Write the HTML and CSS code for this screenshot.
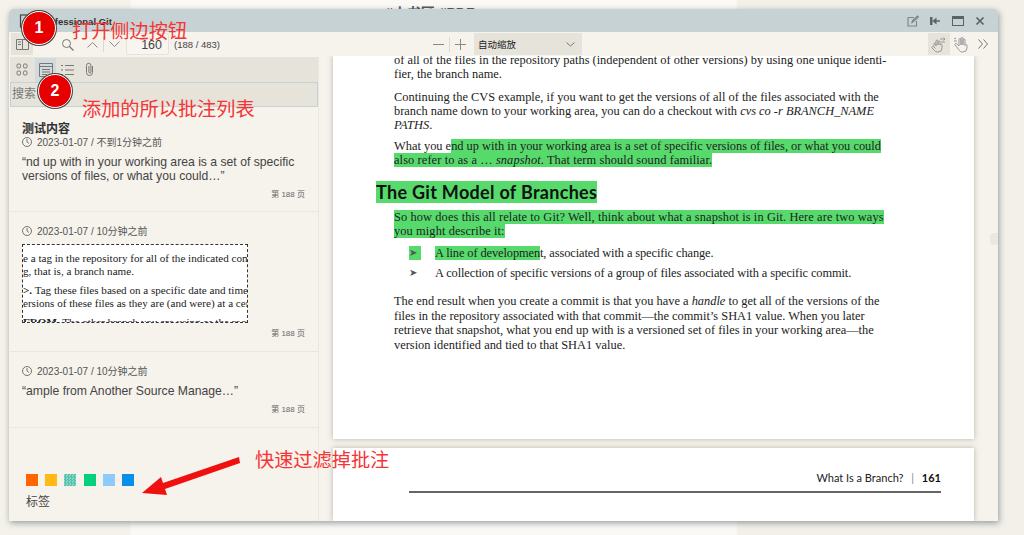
FILE: index.html
```html
<!DOCTYPE html>
<html lang="en">
<head>
    <meta charset="UTF-8">
    <meta name="viewport" content="width=device-width, initial-scale=1.0">
    <title>Professional Git</title>
    <link rel="stylesheet" href="styles.css">
</head>
<body>
    <div class="behind-title">#小书匠 #PDF</div>
    <div class="window">
        <header class="titlebar">
            <svg class="app-icon" width="14" height="14" viewBox="0 0 14 14"><rect x="1.5" y="1" width="11" height="12" fill="none" stroke="#444" stroke-width="1.2"/></svg>
            <span class="title">Professional Git</span>
            <div class="win-btns">
                <svg width="12" height="12" viewBox="0 0 12 12"><path d="M1 2.500h6M1 2.500v8.500h8.500V6M5 7.500l.5-2 5-4.500 1 1-5 4.500z" fill="none" stroke="#7d8688" stroke-width="1.100"/></svg>
                <svg width="12" height="12" viewBox="0 0 12 12"><path d="M1 2h2.500v8H1zM3.500 6l4-3.500v7zM7 5.300h4v1.400H7z" fill="#566"/></svg>
                <svg width="12" height="12" viewBox="0 0 12 12"><rect x=".5" y="1.500" width="11" height="9" fill="none" stroke="#566"/><rect x=".5" y="1.500" width="11" height="2.500" fill="#566"/></svg>
                <svg width="12" height="12" viewBox="0 0 12 12"><path d="M2.500 2.500l7 7M9.500 2.500l-7 7" stroke="#566" stroke-width="1.700"/></svg>
            </div>
        </header>
        <div class="toolbar">
            <button class="tool-btn tool-on sidebar-toggle">
                <svg width="13" height="11" viewBox="0 0 13 11"><path d="M.5.500h12v10H.5zM6.500.5v10M2 3h3M2 5.500h3" fill="none" stroke="#777"/></svg>
            </button>
            <svg class="icon-search" width="13" height="13" viewBox="0 0 13 13"><circle cx="5.500" cy="5.500" r="4" fill="none" stroke="#777"/><path d="M8.500 8.500l4 4" stroke="#777" stroke-width="1.200"/></svg>
            <svg class="icon-up" width="11" height="7" viewBox="0 0 11 7"><path d="M.5 6.500l5-5 5 5" fill="none" stroke="#888"/></svg>
            <i class="divider"></i>
            <svg class="icon-down" width="11" height="7" viewBox="0 0 11 7"><path d="M.5.500l5 5 5-5" fill="none" stroke="#888"/></svg>
            <div class="page-input">160</div>
            <span class="page-count">(188 / 483)</span>
            <svg class="icon-minus" width="11" height="11" viewBox="0 0 11 11"><path d="M0 5.500h11" stroke="#888"/></svg>
            <i class="divider divider-zoom"></i>
            <svg class="icon-plus" width="11" height="11" viewBox="0 0 11 11"><path d="M0 5.500h11M5.500 0v11" stroke="#888"/></svg>
            <div class="zoom-select">
                <span>自动缩放</span>
                <svg width="9" height="5" viewBox="0 0 9 5"><path d="M.5.500l4 3.500 4-3.500" fill="none" stroke="#777"/></svg>
            </div>
            <button class="tool-btn tool-on hand-btn">
                <svg width="16" height="17" viewBox="0 0 16 17"><path d="M3 10V8a1 1 0 0 1 2 0V10V5a1 1 0 0 1 2 0v4V6a1 1 0 0 1 2 0v3a1 1 0 0 1 2 0v3a4 4 0 0 1-4 4H6a3 3 0 0 1-2.500-1.500L1 12a1 1 0 0 1 2-1l1.500 1.500M9 3h5M12.500 1.500L14 3l-1.500 1.500M14 6h-4" fill="none" stroke="#999"/></svg>
            </button>
            <svg class="icon-hand2" width="16" height="17" viewBox="0 0 16 17"><path d="M6 10V3.500a1 1 0 0 1 2 0V9V2.500a1 1 0 0 1 2 0V9V4a1 1 0 0 1 2 0v5.500a1 1 0 0 1 2 0V12a4 4 0 0 1-4 4H9a3 3 0 0 1-2.500-1.500L2 9a1 1 0 0 1 2-1l2 2M1 5h3M1 3l2-1" fill="none" stroke="#999"/></svg>
            <svg class="icon-more" width="11" height="10" viewBox="0 0 11 10"><path d="M.5.500l4 4.500-4 4.500M5.500.5l4 4.500-4 4.500" fill="none" stroke="#777"/></svg>
        </div>
        <div class="content">
            <aside class="sidebar">
                <div class="side-tabs">
                    <svg class="tab" width="12" height="13" viewBox="0 0 12 13"><rect x="1" y="1" width="3.500" height="4" rx="1.200" fill="none" stroke="#777"/><rect x="7.500" y="1" width="3.500" height="4" rx="1.200" fill="none" stroke="#777"/><rect x="1" y="8" width="3.500" height="4" rx="1.200" fill="none" stroke="#777"/><rect x="7.500" y="8" width="3.500" height="4" rx="1.200" fill="none" stroke="#777"/></svg>
                    <span class="tab tab-on"><svg width="14" height="14" viewBox="0 0 14 14"><path d="M.5.500h13v13H.5zM.5 3.500h13M3 6.500h8M3 9h8M3 11.500h5" fill="none" stroke="#777"/></svg></span>
                    <svg class="tab" width="13" height="12" viewBox="0 0 13 12"><path d="M0 1.500h2M4 1.500h9M0 6h2M4 6h9M0 10.500h2M4 10.500h9" stroke="#777"/></svg>
                    <svg class="tab" width="11" height="15" viewBox="0 0 11 15"><path d="M8.500 4v6.500a3 3 0 0 1-6 0V3.500a2.200 2.200 0 0 1 4.400 0V10a1 1 0 0 1-2 0V4" fill="none" stroke="#777"/></svg>
                </div>
                <div class="side-search">搜索</div>
                <div class="note note-first">
                    <h3>测试内容</h3>
                    <div class="note-date">
                        <svg width="10" height="10" viewBox="0 0 10 10"><circle cx="5" cy="5" r="4.500" fill="none" stroke="#555" stroke-width=".8"/><path d="M5 2v3l2 1.500" fill="none" stroke="#555" stroke-width=".8"/></svg>
                        2023-01-07 / 不到1分钟之前
                    </div>
                    <p class="quote">“nd up with in your working area is a set of specific versions of files, or what you could…”</p>
                    <div class="note-page">第 188 页</div>
                </div>
                <div class="note note-image">
                    <div class="note-date">
                        <svg width="10" height="10" viewBox="0 0 10 10"><circle cx="5" cy="5" r="4.500" fill="none" stroke="#555" stroke-width=".8"/><path d="M5 2v3l2 1.500" fill="none" stroke="#555" stroke-width=".8"/></svg>
                        2023-01-07 / 10分钟之前
                    </div>
                    <div class="snip">
                        <div>e a tag in the repository for all of the indicated commit</div>
                        <div>g, that is, a branch name.</div>
                        <div class="snip-gap"><b>&gt;.</b> Tag these files based on a specific date and time</div>
                        <div>ersions of these files as they are (and were) at a certain</div>
                        <div class="snip-gap"><b>FROM</b>. The other branch you are using as the root</div>
                    </div>
                    <div class="note-page">第 188 页</div>
                </div>
                <div class="note note-last">
                    <div class="note-date">
                        <svg width="10" height="10" viewBox="0 0 10 10"><circle cx="5" cy="5" r="4.500" fill="none" stroke="#555" stroke-width=".8"/><path d="M5 2v3l2 1.500" fill="none" stroke="#555" stroke-width=".8"/></svg>
                        2023-01-07 / 10分钟之前
                    </div>
                    <p class="quote">“ample from Another Source Manage…”</p>
                    <div class="note-page">第 188 页</div>
                </div>
                <div class="side-foot">
                    <div class="swatches">
                        <i class="sw-orange"></i><i class="sw-yellow"></i><i class="sw-mix"></i><i class="sw-green"></i><i class="sw-sky"></i><i class="sw-blue"></i>
                    </div>
                    <div class="tag-label">标签</div>
                </div>
            </aside>
            <main class="viewer">
                <section class="page page-one">
                    <p>of all of the files in the repository paths (independent of other versions) by using one unique identi-<br>fier, the branch name.</p>
                    <p>Continuing the CVS example, if you want to get the versions of all of the files associated with the<br>branch name down to your working area, you can do a checkout with <em>cvs co -r BRANCH_NAME</em><br><em>PATHS</em>.</p>
                    <p class="third">What you e<mark>nd up with in your working area is a set of specific versions of files, or what you could</mark><br><mark class="wide">also refer to as a … <em>snapshot</em>. That term should sound familiar.</mark></p>
                    <h2><mark>The Git Model of Branches</mark></h2>
                    <p class="after-head"><mark>So how does this all relate to Git? Well, think about what a snapshot is in Git. Here are two ways</mark><br><mark>you might describe it:</mark></p>
                    <ul>
                        <li><mark class="bullet">➤</mark><span><mark>A line of developmen</mark>t, associated with a specific change.</span></li>
                        <li><span class="bullet">➤</span><span>A collection of specific versions of a group of files associated with a specific commit.</span></li>
                    </ul>
                    <p class="last">The end result when you create a commit is that you have a <em>handle</em> to get all of the versions of the<br>files in the repository associated with that commit—the commit’s SHA1 value. When you later<br>retrieve that snapshot, what you end up with is a versioned set of files in your working area—the<br>version identified and tied to that SHA1 value.</p>
                </section>
                <section class="page page-two">
                    <div class="running-head">What Is a Branch? <i>|</i> <b>161</b></div>
                </section>
                <div class="scroll-thumb"></div>
            </main>
        </div>
    </div>

    <div class="mark-num mark-one">1</div>
    <div class="mark-num mark-two">2</div>
    <div class="red-note note-a">打开侧边按钮</div>
    <div class="red-note note-b">添加的所以批注列表</div>
    <div class="red-note note-c">快速过滤掉批注</div>
    <svg class="red-arrow" width="100" height="40" viewBox="0 0 100 40"><path d="M97 0L21 26l-2-6L0 36l25 2-2-6L98 6z" fill="#f01010"/></svg>
</body>
</html>
```

FILE: styles.css
```css
* {
    padding: 0;
    margin: 0;
    box-sizing: border-box;
}
body {
    width: 1024px;
    height: 535px;
    overflow: hidden;
    position: relative;
    font-family: "Liberation Sans", "Noto Sans CJK SC", sans-serif;
    background: linear-gradient(90deg, #f5f2eb 0, #f5f2eb 130px, #fbf9f5 131px, #fbf9f5 736px, #f3f0e9 738px);
    padding: 9px 26px 14px 9px;
}
.behind-title {
    position: absolute;
    left: 385px;
    top: 2px;
    font-size: 14px;
    font-weight: bold;
    color: #555;
}
.window {
    position: relative;
    width: 989px;
    height: 512px;
    display: flex;
    flex-direction: column;
    background: #f6f2ec;
    border-radius: 5px 5px 0 0;
    box-shadow: 1px 2px 6px rgba(80, 100, 105, 0.6);
}
.titlebar {
    height: 23px;
    flex: none;
    display: flex;
    align-items: center;
    padding-left: 10px;
    background: #c6d2d4;
    border-radius: 5px 5px 0 0;
}
.title {
    margin-left: 6px;
    padding-top: 1px;
    font-size: 9.500px;
    font-weight: bold;
    color: #333;
}
.win-btns {
    margin-left: auto;
    display: flex;
    gap: 10.500px;
    padding-right: 12px;
}
.toolbar {
    height: 24px;
    flex: none;
    display: flex;
    align-items: center;
    padding-left: 2px;
}
.tool-btn {
    border: none;
    background: none;
    display: flex;
    align-items: center;
    justify-content: center;
}
.tool-on {
    background: #e6e3db;
}
.sidebar-toggle {
    width: 22px;
    height: 22px;
}
.icon-search { margin-left: 28px; }
.icon-up { margin-left: 13px; }
.divider {
    width: 1px;
    height: 15px;
    margin-left: 5px;
    background: #ddd9d1;
}
.icon-down { margin-left: 5px; }
.page-input {
    width: 43px;
    height: 22px;
    margin-left: 6px;
    padding-right: 6px;
    text-align: right;
    font-size: 12.500px;
    line-height: 22px;
    color: #444;
    background: #f8f5f0;
    border: 1px solid #e6e3db;
    border-radius: 2px;
}
.page-count {
    margin-left: 5px;
    font-size: 9.500px;
    color: #444;
    width: 259px;
}
.icon-minus { margin-left: 0; }
.divider-zoom { margin-left: 5px; }
.icon-plus { margin-left: 5px; }
.zoom-select {
    width: 108px;
    height: 22px;
    margin-left: 8px;
    padding: 0 7px 0 4px;
    display: flex;
    align-items: center;
    justify-content: space-between;
    font-size: 9.500px;
    color: #222;
    background: #e6e3db;
}
.hand-btn {
    width: 22px;
    height: 22px;
    margin-left: 346px;
}
.icon-hand2 { margin-left: 3px; }
.icon-more { margin-left: 9px; }
.content {
    flex: 1;
    display: flex;
    min-height: 0;
}
.sidebar {
    width: 309px;
    flex: none;
    display: flex;
    flex-direction: column;
    margin: 1px 0 0 1px;
    border-right: 1px solid #ebe7df;
}
.side-tabs {
    height: 25px;
    flex: none;
    display: flex;
    align-items: center;
    padding-left: 6px;
    background: #e6e3db;
}
.tab { margin-right: 10px; }
.tab-on {
    width: 21px;
    height: 24px;
    margin: 0 5px 0 -3px;
    display: flex;
    align-items: center;
    justify-content: center;
    background: #d2dbdc;
}
.side-search {
    height: 25px;
    flex: none;
    padding-left: 1px;
    font-size: 12px;
    line-height: 23px;
    color: #777;
    background: #e6e3db;
    border: 1px solid #c6d2d4;
}
.note {
    flex: none;
    padding: 0 12px;
    border-bottom: 1px solid #ebe7df;
}
.note-first { height: 105px; padding-top: 15px; }
.note-image { height: 140px; padding-top: 13px; }
.note-last { height: 76px; padding-top: 13px; }
.note h3 {
    font-size: 12px;
    line-height: 14px;
    color: #333;
}
.note-date {
    display: flex;
    align-items: center;
    gap: 5px;
    font-size: 10px;
    line-height: 13px;
    color: #555;
}
.note-date svg { margin-top: -2px; }
.quote {
    margin-top: 6px;
    font-size: 12.200px;
    line-height: 14px;
    color: #444;
}
.note-page {
    margin-top: 5px;
    padding-right: 1px;
    font-size: 8px;
    text-align: right;
    color: #666;
}
.note-image .note-page { margin-top: 4px; }
.snip {
    width: 226px;
    height: 79px;
    margin-top: 6px;
    padding-top: 7px;
    overflow: hidden;
    white-space: nowrap;
    font-family: "Liberation Serif", serif;
    font-size: 11.100px;
    line-height: 13px;
    color: #222;
    background: #fff;
    border: 1px dashed #333;
}
.snip-gap { margin-top: 6px; }
.side-foot {
    flex: 1;
    display: flex;
    flex-direction: column;
    padding: 46px 0 0 16px;
}
.swatches {
    display: flex;
    gap: 7.200px;
}
.swatches i {
    width: 12px;
    height: 12px;
}
.sw-orange { background: #ff6600; }
.sw-yellow { background: #ffba14; }
.sw-mix { background: repeating-conic-gradient(#50b8d8 0 25%, #8de08a 0 50%) 0 0 / 3px 3px; }
.sw-green { background: #04d17d; }
.sw-sky { background: #8ccbfa; }
.sw-blue { background: #0890e8; }
.tag-label {
    margin-top: 6px;
    font-size: 12px;
    color: #444;
}
.viewer {
    flex: 1;
    position: relative;
    padding-left: 14px;
    min-width: 0;
    overflow: hidden;
}
.page {
    width: 641px;
    background: #fff;
    box-shadow: 0 0 5px rgba(120, 120, 105, 0.5);
    font-family: "Liberation Serif", serif;
    font-size: 12.400px;
    line-height: 14px;
    color: #222;
    overflow: hidden;
}
.page-one {
    height: 383px;
    padding-left: 61px;
    white-space: nowrap;
}
.page-one p { margin-top: 9px; }
.page-one p:first-child { margin-top: -3px; }
.page-one .third { margin-top: 7px; }
mark {
    background: #56da6c;
    color: inherit;
}
.wide { letter-spacing: 0.1px; }
h2 {
    margin: 15px 0 0 -18px;
    font-family: Lato, sans-serif;
    font-size: 18px;
    line-height: 20px;
    letter-spacing: 0.3px;
    color: #111;
}
.page-one .after-head {
    margin-top: 8px;
    letter-spacing: 0.1px;
}
ul { list-style: none; margin-top: 8px; }
li {
    display: flex;
    margin-bottom: 6px;
    padding-left: 15px;
    letter-spacing: -0.1px;
}
.bullet {
    width: 12px;
    margin-right: 14px;
    font-size: 10px;
    color: #555;
}
.page-one .last {
    margin-top: 14px;
    line-height: 14.600px;
}
.page-two {
    height: 73px;
    margin-top: 9px;
    padding: 23px 33px 0 76px;
}
.running-head {
    height: 22px;
    text-align: right;
    font-family: Lato, sans-serif;
    font-size: 11px;
    line-height: 14px;
    border-bottom: 2px solid #666;
}
.running-head i {
    font-style: normal;
    color: #888;
    margin: 0 5px;
}
.running-head b { color: #111; }
.scroll-thumb {
    position: absolute;
    right: 0;
    top: 177px;
    width: 8px;
    height: 12px;
    border-radius: 4px 0 0 4px;
    background: #ebe8e0;
}
/* annotations pasted over the screenshot */
.mark-num {
    position: absolute;
    width: 34px;
    height: 34px;
    border-radius: 50%;
    background: #e60000;
    border: 1px solid #fff;
    box-shadow: 0 0 0 1px #444;
    color: #fff;
    font-size: 16px;
    font-weight: bold;
    line-height: 32px;
    text-align: center;
}
.mark-one { left: 22px; top: 11px; }
.mark-two { left: 38px; top: 74px; }
.red-note {
    position: absolute;
    font-size: 19.200px;
    line-height: 24px;
    color: #f53535;
    white-space: nowrap;
}
.note-a { left: 72px; top: 20px; }
.note-b { left: 82px; top: 98px; }
.note-c { left: 255px; top: 449px; }
.red-arrow {
    position: absolute;
    left: 142px;
    top: 457px;
}
```
